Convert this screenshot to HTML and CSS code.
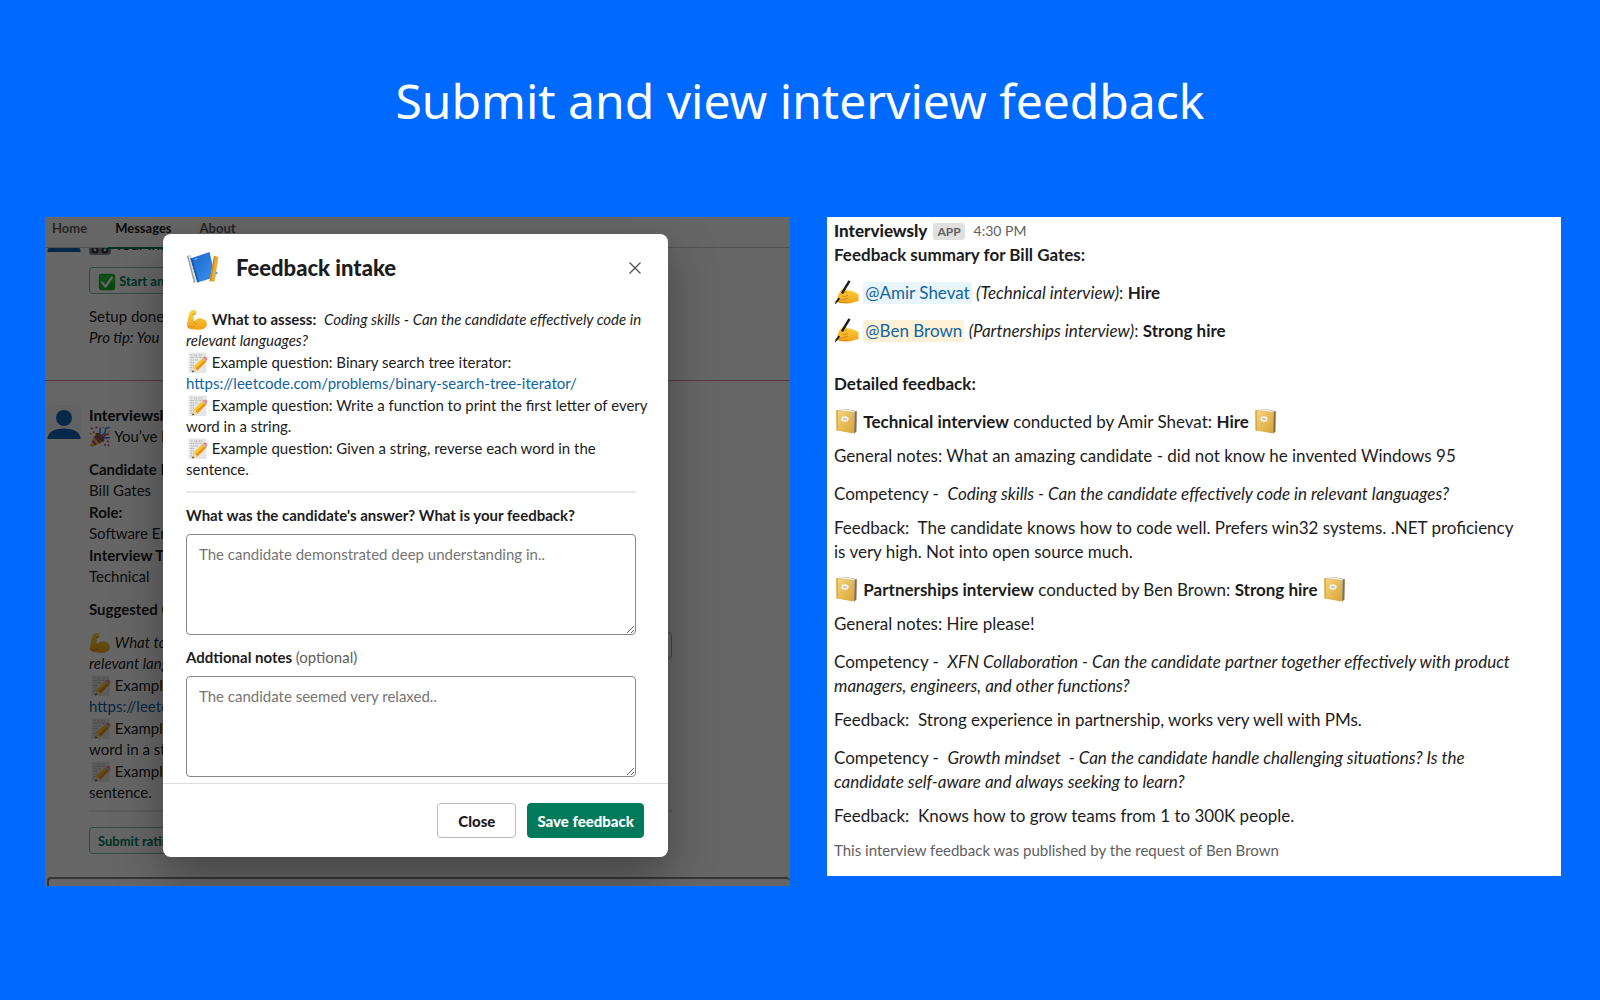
FILE: index.html
```html
<!DOCTYPE html>
<html lang="en">
<head>
<meta charset="utf-8">
<title>Submit and view interview feedback</title>
<link rel="stylesheet" href="styles.css">
</head>
<body>
<svg class="sprite" aria-hidden="true">
  <defs>
    <linearGradient id="skin" x1="0" y1="0" x2="0" y2="1"><stop offset="0" stop-color="#ffd33f"/><stop offset="1" stop-color="#f0a21c"/></linearGradient>
    <linearGradient id="gold" x1="0" y1="0" x2="1" y2="1"><stop offset="0" stop-color="#f7d77e"/><stop offset="1" stop-color="#d8a237"/></linearGradient>
    <linearGradient id="blue" x1="0" y1="0" x2="1" y2="1"><stop offset="0" stop-color="#1767cc"/><stop offset="1" stop-color="#3f93ee"/></linearGradient>
    <symbol id="arm" viewBox="0 0 22 22">
      <path d="M5.500 1.500C7 .6 9 .9 10.100 2.200c.7 1 .6 2.200-.2 3l-2 .6c-.6 2.200-.6 4.600.2 6.800 1.300-2.300 4-3.600 6.900-3.200 3.500.4 6 2.900 5.900 6-.1 3.600-3.800 5.100-9 5.300-4.800.3-9.600-.5-10.600-2.600C.6 16.300 2 8 3.800 3.600c.4-1 .9-1.700 1.700-2.100z" fill="url(#skin)"/>
      <path d="M7.900 12.800c.4 1.200 1.200 2 2.200 2.300M6.900 5.600l2.600-.6M2.200 17.200c2.600 1 4.600.8 6.300.2" fill="none" stroke="#cf7d12" stroke-width=".8" stroke-linecap="round"/>
    </symbol>
    <symbol id="memo" viewBox="0 0 22 22">
      <path d="M2.500.5h18v20.500h-18z" fill="#e6e6e6"/>
      <path d="M5 3h2m1 0h3m1.500 0h4M4.500 5.500h4m1-.4h3m1 .2h3M5 8h3m1 0h3M4.500 10.500h4m-3.500 2.500h3m-3.500 2.500h2.500m-2.500 2.500h2" stroke="#a9a9a9" stroke-width=".9" stroke-dasharray="1.500 .6"/>
      <path d="M7.600 14.600L17 5.600l3.600 3.600-9.200 9.200-5 1.900z" fill="#fbc62d"/>
      <path d="M9.600 16.400L18.800 7.400l1.800 1.800-9.200 9.200z" fill="#e8951a"/>
      <path d="M7.600 14.600l3.800 3.800-5.200 2z" fill="#f0d3a1"/><path d="M6.800 18.200l1.400 1.400-2.200.8z" fill="#333"/>
      <path d="M16.200 6.400l1.200-1.200 3.600 3.600-1.200 1.200z" fill="#b9bcc1"/><path d="M17.200 5.400c1-1.200 2.200-1.200 3.200-.2s1.200 2.200.4 3.400z" fill="#f2798c"/>
    </symbol>
    <symbol id="books" viewBox="0 0 34 34">
      <path d="M1 5l4-1.500 7 26.500-4 2z" fill="#dadada"/><path d="M1 5l1.200-.4 7 27-1.200.4z" fill="#9b9b9b"/>
      <path d="M28 20l4 2-3 2z" fill="#2f80dd"/>
      <path d="M4.500 7.500L23.500 1l6 25-18 5.500z" fill="url(#blue)"/>
      <path d="M4.500 7.500l1.400-.5 7 24-1.400.5z" fill="#1257b3"/><path d="M8.500 8.500l3-1" stroke="#8fbdf3" stroke-width="1"/>
      <path d="M28 5l4.500.8-4 25-5-.8z" fill="#eba936"/><path d="M28 5l1.400.3-4.300 25-1.600-.3z" fill="#c9892a"/>
    </symbol>
    <symbol id="party" viewBox="0 0 22 22">
      <path d="M7 7l8 8.500L2.500 21 .8 19.600z" fill="#f2bd2c"/>
      <path d="M5.600 10.400l5.800 6.800M3.600 14.600l3.400 4.400" stroke="#a43ec2" stroke-width="2"/>
      <ellipse cx="11" cy="11.200" rx="2.600" ry="5.800" transform="rotate(-44 11 11.200)" fill="#9a5a17"/>
      <path d="M10.500 10.500C12 7 10 5 11.500 1.500M12 11c1-4 5-2.500 4.500-6.500S20 3 20.500 1M13 13c2.500-3 4 0 8-1.500" fill="none" stroke="#3b7de8" stroke-width="1.600"/>
      <path d="M12.500 12c3-1.500 2.500-4 7.500-4" fill="none" stroke="#e63d52" stroke-width="1.600"/>
      <path d="M2 2l1.500 1M6.500.8L8 2.200M4 6l1.500.5M18 15l2 1M20 18.500l-1 1.500M15.500 18l.8 1.600" stroke="#df3b5e" stroke-width="1.700"/>
      <path d="M1 8l1.500-.8M14 2.200l1-1.400M20.800 6l-1.200-.8" stroke="#e6b422" stroke-width="1.700"/>
    </symbol>
    <symbol id="check" viewBox="0 0 22 22">
      <rect x="1" y="1" width="20" height="20" rx="3" fill="#17b32b"/><rect x="2" y="2" width="18" height="10" rx="2" fill="#46d24f" opacity=".45"/>
      <path d="M5 11.500l4.200 5L17 5.500" fill="none" stroke="#fff" stroke-width="2.800" stroke-linecap="round" stroke-linejoin="round"/>
    </symbol>
    <symbol id="knobs" viewBox="0 0 22 22">
      <rect x="0" y="3" width="22" height="18" rx="3" fill="#8b8f94"/><circle cx="6" cy="16" r="3.600" fill="#303236"/><circle cx="16" cy="16" r="3.600" fill="#303236"/><circle cx="6" cy="16" r="1.400" fill="#dadada"/><circle cx="16" cy="16" r="1.400" fill="#dadada"/>
    </symbol>
    <symbol id="writing" viewBox="0 0 25 25">
      <path d="M4.500 14.500C6 10.500 8 8.500 10.500 8.300c2-.1 2.600 1 2 2l3.300.2c3 .7 6 1.800 8.700 3.700v7.300c-3.500-.5-6.500 2-10.500 2.100-4.200.1-8-.6-11.600-1.500-1-.6-.5-1.700.6-2.100z" fill="url(#skin)"/>
      <path d="M6.500 14.500c2-1.400 4.300-2.500 6.600-2.700M4.600 20c3.500 0 6.500-.5 9.500-2M9 16.500c2 .2 3.800-.4 5-1.500M5 22.300c3 .3 6 .3 8.500-.3" fill="none" stroke="#c77c10" stroke-width=".8"/>
      <path d="M15.500.8L10.200 9.700l-2.200 3.600" fill="none" stroke="#1d1d1f" stroke-width="2.400"/><path d="M4.500 17.500l1.500 1-2.300 3.500L.8 24.600l.8-3z" fill="#1d1d1f"/>
    </symbol>
    <symbol id="notebook" viewBox="0 0 25 25">
      <path d="M2.500 1L14 .2l8.700 1.700-.3 20.300-2 2.300z" fill="#b9b0a2"/><path d="M21 3l1.700-1.100-.4 20.300-2.100 2.300z" fill="#8a6a35"/><path d="M4 1.400L14 .6l7 1.600-2 .8z" fill="#eeeae2"/>
      <path d="M2.300 1.200L20 3.200l-.3 21.300L2.600 21.400z" fill="url(#gold)"/><path d="M2.300 1.200l1.500.2.200 20.300-1.400-.3z" fill="#d9a43c"/>
      <ellipse cx="11" cy="10" rx="3.600" ry="2.800" fill="#f7f5ee"/><path d="M9 9.800l4 .5" stroke="#8c8c8c" stroke-width=".8"/>
    </symbol>
    <symbol id="person" viewBox="0 0 34 34">
      <rect width="34" height="34" rx="3" fill="#f3f4f8"/><circle cx="17" cy="13" r="8" fill="#1264b5"/><path d="M.5 34c0-7 7-10.500 16.500-10.500S33.500 27 33.500 34z" fill="#1264b5"/>
    </symbol>
  </defs>
</svg>

<h1 class="headline">Submit and view interview feedback</h1>

<main class="showcase">
  <section class="app">
    <div class="chat">
      <nav class="tabs">
        <a class="tab" href="#home">Home</a>
        <a class="tab tab-active" href="#messages">Messages</a>
        <a class="tab" href="#about">About</a>
      </nav>
      <div class="message message-first">
        <svg class="avatar"><use href="#person"/></svg>
        <div class="content">
          <p><svg class="emoji"><use href="#knobs"/></svg> Your inter</p>
          <button class="outline" type="button"><svg class="emoji emoji-small"><use href="#check"/></svg> Start an</button>
          <p>Setup done</p>
          <p><em>Pro tip: You c</em></p>
        </div>
      </div>
      <div class="message message-second">
        <svg class="avatar"><use href="#person"/></svg>
        <div class="content">
          <p class="author">Interviewsly</p>
          <p><svg class="emoji"><use href="#party"/></svg> You’ve b</p>
          <dl class="details">
            <dt>Candidate N</dt><dd>Bill Gates</dd>
            <dt>Role:</dt><dd>Software En</dd>
            <dt>Interview Ty</dt><dd>Technical</dd>
          </dl>
          <p class="suggested"><b>Suggested C</b></p>
          <div class="accessory-row">
            <div class="questions">
              <p><svg class="emoji"><use href="#arm"/></svg> <em>What to<br>relevant lang</em></p>
              <p><svg class="emoji"><use href="#memo"/></svg> Example<br><a href="#leetcode">https://leetc</a></p>
              <p><svg class="emoji"><use href="#memo"/></svg> Example<br>word in a st</p>
              <p><svg class="emoji"><use href="#memo"/></svg> Example<br>sentence.</p>
            </div>
            <button class="outline" type="button" aria-label="Options"></button>
          </div>
          <hr class="rule">
          <button class="outline" type="button">Submit rating</button>
        </div>
      </div>
      <div class="composer"></div>
    </div>

    <div class="scrim">
      <form class="modal">
        <header class="modal-head">
          <svg class="modal-icon"><use href="#books"/></svg>
          <h2>Feedback intake</h2>
          <button class="dismiss" type="button" aria-label="Dismiss">
            <svg viewBox="0 0 12 12" width="12" height="12"><path d="M.5.5l11 11M11.500.5l-11 11" stroke="#555" stroke-width="1.400" fill="none"/></svg>
          </button>
        </header>
        <div class="modal-body">
          <div class="questions">
            <p><svg class="emoji"><use href="#arm"/></svg> <b>What to assess:</b>&nbsp; <em>Coding skills - Can the candidate effectively code in<br>relevant languages?</em></p>
            <p><svg class="emoji"><use href="#memo"/></svg> Example question: Binary search tree iterator:<br><a href="#leetcode">https://leetcode.com/problems/binary-search-tree-iterator/</a></p>
            <p><svg class="emoji"><use href="#memo"/></svg> Example question: Write a function to print the first letter of every<br>word in a string.</p>
            <p><svg class="emoji"><use href="#memo"/></svg> Example question: Given a string, reverse each word in the<br>sentence.</p>
          </div>
          <hr class="rule">
          <label for="answer">What was the candidate's answer? What is your feedback?</label>
          <textarea id="answer" placeholder="The candidate demonstrated deep understanding in.."></textarea>
          <label for="notes">Addtional notes <span>(optional)</span></label>
          <textarea id="notes" placeholder="The candidate seemed very relaxed.."></textarea>
        </div>
        <footer class="modal-foot">
          <button class="btn" type="button">Close</button>
          <button class="btn btn-primary" type="button">Save feedback</button>
        </footer>
      </form>
    </div>
  </section>

  <article class="summary">
    <header class="summary-head"><b class="author">Interviewsly</b><span class="badge">APP</span><time>4:30 PM</time></header>
    <p><b>Feedback summary for Bill Gates:</b></p>
    <p class="gap-l"><svg class="emoji emoji-large"><use href="#writing"/></svg> <a class="mention" href="#amir">@Amir Shevat</a> <em>(Technical interview)</em>: <b>Hire</b></p>
    <p class="gap-l"><svg class="emoji emoji-large"><use href="#writing"/></svg> <a class="mention mention-self" href="#ben">@Ben Brown</a> <em>(Partnerships interview)</em>: <b>Strong hire</b></p>
    <p class="gap-xl"><b>Detailed feedback:</b></p>
    <p class="gap-l"><svg class="emoji emoji-large"><use href="#notebook"/></svg> <b>Technical interview</b> conducted by Amir Shevat: <b>Hire</b> <svg class="emoji emoji-large"><use href="#notebook"/></svg></p>
    <p class="gap-s">General notes: What an amazing candidate - did not know he invented Windows 95</p>
    <p class="gap-l">Competency -&nbsp; <em>Coding skills - Can the candidate effectively code in relevant languages?</em></p>
    <p class="gap-s">Feedback:&nbsp; The candidate knows how to code well. Prefers win32 systems. .NET proficiency is very high. Not into open source much.</p>
    <p class="gap-l"><svg class="emoji emoji-large"><use href="#notebook"/></svg> <b>Partnerships interview</b> conducted by Ben Brown: <b>Strong hire</b> <svg class="emoji emoji-large"><use href="#notebook"/></svg></p>
    <p class="gap-s">General notes: Hire please!</p>
    <p class="gap-l">Competency -&nbsp; <em>XFN Collaboration - Can the candidate partner together effectively with product managers, engineers, and other functions?</em></p>
    <p class="gap-s">Feedback:&nbsp; Strong experience in partnership, works very well with PMs.</p>
    <p class="gap-l">Competency -&nbsp; <em>Growth mindset&nbsp; - Can the candidate handle challenging situations? Is the candidate self-aware and always seeking to learn?</em></p>
    <p class="gap-s">Feedback:&nbsp; Knows how to grow teams from 1 to 300K people.</p>
    <p class="gap-s footnote">This interview feedback was published by the request of Ben Brown</p>
  </article>
</main>
</body>
</html>
```

FILE: styles.css
```css
* { box-sizing: border-box; }

body {
  margin: 0;
  min-height: 100vh;
  background: #006aff;
  color: #1d1c1d;
  font-family: Lato, "Liberation Sans", sans-serif;
}

p, h1, h2, dl, dd { margin: 0; }
a { color: #1264a3; text-decoration: none; }
b, dt { font-weight: 700; }
button, textarea { font-family: inherit; }

.sprite { position: absolute; width: 0; height: 0; }

.headline {
  padding: 67px 0 82px;
  color: #fff;
  font: 400 48px/68px "Noto Sans", sans-serif;
  text-align: center;
}

.showcase {
  display: grid;
  grid-template-columns: 745fr 734fr;
  gap: 37px;
  align-items: start;
  padding: 0 39px 40px 45px;
}

.emoji { width: 22px; height: 22px; margin: -4px 0; vertical-align: -2px; }
.emoji-small { width: 18px; height: 18px; vertical-align: -1px; }
.emoji-large { width: 25px; height: 25px; vertical-align: -2px; }

/* Messages tab, behind the dialog */
.app { display: grid; overflow: hidden; }
.app > * { grid-area: 1 / 1; min-width: 0; }

.chat {
  height: 0;
  min-height: 100%;
  overflow: hidden;
  background: #fff;
  font-size: 15px;
  line-height: 21px;
}

.tabs {
  display: flex;
  gap: 14px;
  height: 31px;
  border-bottom: 1px solid #ccc;
  background: #fff;
  position: relative;
  font-size: 13px;
  line-height: 22px;
}
.tab { height: 32px; padding: 0 7px; color: #616061; font-weight: 700; }
.tab-active { color: #1d1c1d; border-bottom: 2px solid #007a5a; }

.message { display: grid; grid-template-columns: 34px 583px; gap: 8px; padding-left: 2px; }
.avatar { width: 34px; height: 34px; }
.message-first { margin-top: -30px; height: 163px; border-bottom: 1px solid #e0899c; }
.message-first .content { padding-top: 16px; }
.message-first .outline { margin: 12px 0; }
.message-second { padding-top: 24px; }

.outline {
  display: block;
  height: 27px;
  min-width: 80px;
  padding: 0 8px;
  border: 1px solid #7fbcac;
  border-radius: 4px;
  background: #fff;
  color: #007a5a;
  font-size: 13px;
  font-weight: 700;
  white-space: nowrap;
}
.author { font-weight: 900; }
.details { margin-top: 12px; }
.details dd + dt, .questions p + p { margin-top: 1px; }
.questions { white-space: nowrap; }
.suggested { margin: 12px 0; }
.accessory-row { display: flex; justify-content: space-between; align-items: start; }
.rule { height: 2px; margin: 7px 0 15px; border: 0; background: #e8e8e8; }
.composer { height: 40px; margin: 23px 0 0 2px; border: 2px solid #888; border-right: 0; border-radius: 4px; }

.scrim {
  display: flex;
  justify-content: center;
  align-items: start;
  padding: 17px 4px 29px 0;
  background: rgba(0, 0, 0, 0.6);
  position: relative;
}

.modal {
  width: 505px;
  border-radius: 8px;
  background: #fff;
  box-shadow: 0 18px 48px rgba(0, 0, 0, 0.35);
  font-size: 15px;
  line-height: 21px;
}
.modal-head { display: flex; align-items: center; padding: 16px 27px 16px 23px; }
.modal-head h2 { flex: 1; font-size: 22px; font-weight: 900; line-height: 36px; }
.modal-icon { width: 34px; height: 34px; margin-right: 16px; }
.dismiss { display: flex; padding: 0; border: 0; background: none; }
.modal-body { padding: 7px 32px 6px 23px; }
.modal-body .rule { margin: 11px 0 12px; }
.modal-body label { display: block; margin-bottom: 8px; font-weight: 700; }
.modal-body label span { color: #616061; font-weight: 400; }
.modal-body textarea {
  display: block;
  width: 100%;
  height: 101px;
  margin-bottom: 12px;
  padding: 9px 12px;
  border: 1px solid #868686;
  border-radius: 4px;
  color: inherit;
  font-size: 15px;
  line-height: 21px;
}
.modal-body textarea:last-child { margin-bottom: 0; }
.modal-body textarea::placeholder { color: #757575; }
.modal-foot {
  display: flex;
  justify-content: flex-end;
  gap: 11px;
  padding: 19px 24px 19px;
  border-top: 1px solid #ddd;
}
.btn {
  height: 35px;
  padding: 0 20px;
  border: 1px solid #bbb;
  border-radius: 4px;
  background: #fff;
  color: #1d1c1d;
  font-size: 15px;
  font-weight: 900;
}
.btn-primary { padding: 0 9px; border-color: #007a5a; background: #007a5a; color: #fff; }

/* Published feedback summary */
.summary { padding: 2px 40px 14px 7px; background: #fff; font-size: 17px; line-height: 24px; }
.summary-head { display: flex; align-items: center; }
.badge {
  margin: 0 9px 0 6px;
  padding: 0 4px;
  border-radius: 3px;
  background: #e0e0e0;
  color: #616061;
  font-size: 12px;
  font-weight: 700;
  line-height: 17px;
}
.summary time { color: #616061; font-size: 14px; }
.gap-s { margin-top: 10px; }
.gap-l { margin-top: 14px; }
.gap-xl { margin-top: 29px; }
.mention { padding: 0 2px 1px; border-radius: 3px; background: #e8f5fa; }
.mention-self { background: #fdf2d7; }
.footnote { color: #616061; font-size: 15px; }
```
